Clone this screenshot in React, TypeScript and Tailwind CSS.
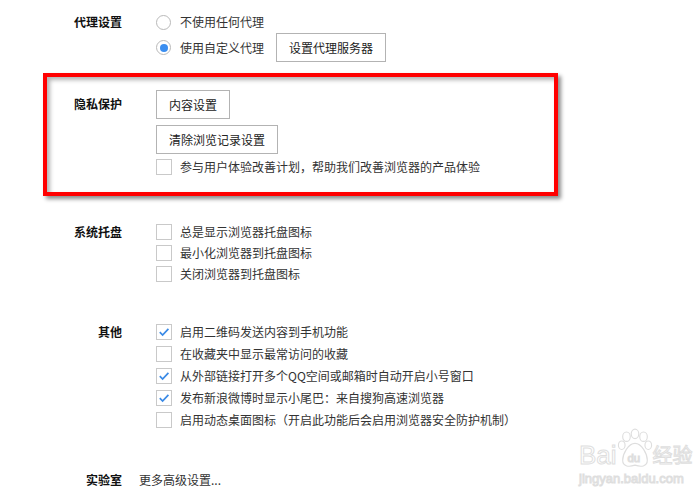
const FONT = "font-['Microsoft_YaHei','Noto_Sans_CJK_SC',sans-serif]";

function Radio({ checked }: { checked?: boolean }) {
  return (
    <span className="flex h-[15px] w-[15px] shrink-0 items-center justify-center rounded-full border border-[#b9b9b9] bg-white">
      {checked && <span className="h-[8px] w-[8px] rounded-full bg-[#3b8ef0]" />}
    </span>
  );
}

function Check({ checked }: { checked?: boolean }) {
  return (
    <span className="flex h-[16px] w-[16px] shrink-0 items-center justify-center border border-[#c9c9c9] bg-white">
      {checked && (
        <svg width="12" height="12" viewBox="0 0 12 12" fill="none">
          <path d="M1.8 6.2 L4.6 9 L10.4 2.8" stroke="#3a8ae6" strokeWidth="1.7" />
        </svg>
      )}
    </span>
  );
}

function Btn({ children }: { children: React.ReactNode }) {
  return (
    <button className="h-[29px] border border-[#b3b3b3] bg-white px-[12px] text-[12px] text-[#222]">
      {children}
    </button>
  );
}

function CheckRow({ text, checked, h = "h-[22px]" }: { text: string; checked?: boolean; h?: string }) {
  return (
    <div className={`flex ${h} items-center gap-[8px]`}>
      <Check checked={checked} />
      <span>{text}</span>
    </div>
  );
}

function Section({
  label,
  lh,
  className,
  children,
}: {
  label: string;
  lh: string;
  className: string;
  children: React.ReactNode;
}) {
  return (
    <div className={`flex ${className}`}>
      <div className={`w-[122px] shrink-0 text-right font-bold text-[#111] ${lh}`}>{label}</div>
      <div className="ml-[34px] flex flex-col">{children}</div>
    </div>
  );
}

function Watermark() {
  const stroke = "text-transparent [-webkit-text-stroke:1px_#dedede]";
  return (
    <div className="pointer-events-none absolute left-[579px] top-[428px] flex flex-col">
      <div className="flex items-end">
        <span className={`font-['Liberation_Sans',sans-serif] text-[26px] leading-[30px] ${stroke}`}>Bai</span>
        <svg width="36" height="42" viewBox="0 0 38 42" fill="none" stroke="#dedede" strokeWidth="1.2">
          <ellipse cx="10" cy="8" rx="4" ry="5" />
          <ellipse cx="19" cy="5" rx="4" ry="5" />
          <ellipse cx="28" cy="8" rx="4" ry="5" />
          <ellipse cx="33" cy="17" rx="3.5" ry="4.5" />
          <ellipse cx="5" cy="17" rx="3.5" ry="4.5" />
          <path d="M19 15 C12 15 6 26 6 33 C6 40 13 40 19 38 C25 40 32 40 32 33 C32 26 26 15 19 15 Z" />
          <text x="11" y="35" fontSize="12" fontFamily="Liberation Sans" fill="none">du</text>
        </svg>
        <span className={`text-[20px] leading-[30px] ${stroke} font-['Noto_Sans_CJK_SC',sans-serif]`}>经验</span>
      </div>
      <span className={`mt-[1px] font-['Liberation_Sans',sans-serif] text-[13px] leading-[16px] ${stroke}`}>
        jingyan.baidu.com
      </span>
    </div>
  );
}

export default function App() {
  return (
    <div className={`relative h-[500px] w-[700px] overflow-hidden bg-white text-[12px] text-[#333] ${FONT}`}>
      <Section label="代理设置" lh="leading-[22px]" className="pt-[11px]">
        <div className="flex h-[22px] items-center gap-[9px]">
          <Radio />
          <span>不使用任何代理</span>
        </div>
        <div className="flex h-[29px] items-center">
          <Radio checked />
          <span className="ml-[9px]">使用自定义代理</span>
          <span className="ml-[12px]">
            <Btn>设置代理服务器</Btn>
          </span>
        </div>
      </Section>

      <div className="relative mt-[28px]">
        <Section label="隐私保护" lh="leading-[28px]" className="">
          <div className="flex flex-col items-start gap-[6px]">
            <Btn>内容设置</Btn>
            <Btn>清除浏览记录设置</Btn>
          </div>
          <div className="mt-[2px]">
            <CheckRow text="参与用户体验改善计划，帮助我们改善浏览器的产品体验" />
          </div>
        </Section>
        <div className="pointer-events-none absolute left-[43px] top-[-17px] h-[123px] w-[515px] border-4 border-[#ff0000] shadow-[3px_3px_4px_rgba(0,0,0,0.45),inset_3px_3px_4px_rgba(0,0,0,0.3)]" />
      </div>

      <Section label="系统托盘" lh="leading-[21px]" className="mt-[43px]">
        <CheckRow h="h-[21px]" text="总是显示浏览器托盘图标" />
        <CheckRow h="h-[21px]" text="最小化浏览器到托盘图标" />
        <CheckRow h="h-[21px]" text="关闭浏览器到托盘图标" />
      </Section>

      <Section label="其他" lh="leading-[22px]" className="mt-[37px]">
        <CheckRow checked text="启用二维码发送内容到手机功能" />
        <CheckRow text="在收藏夹中显示最常访问的收藏" />
        <CheckRow checked text="从外部链接打开多个QQ空间或邮箱时自动开启小号窗口" />
        <CheckRow checked text="发布新浪微博时显示小尾巴：来自搜狗高速浏览器" />
        <CheckRow text="启用动态桌面图标（开启此功能后会启用浏览器安全防护机制）" />
      </Section>

      <div className="mt-[38px] flex h-[22px] items-center">
        <div className="w-[122px] shrink-0 text-right font-bold text-[#111]">实验室</div>
        <div className="ml-[17px]">更多高级设置...</div>
      </div>

      <Watermark />
    </div>
  );
}
